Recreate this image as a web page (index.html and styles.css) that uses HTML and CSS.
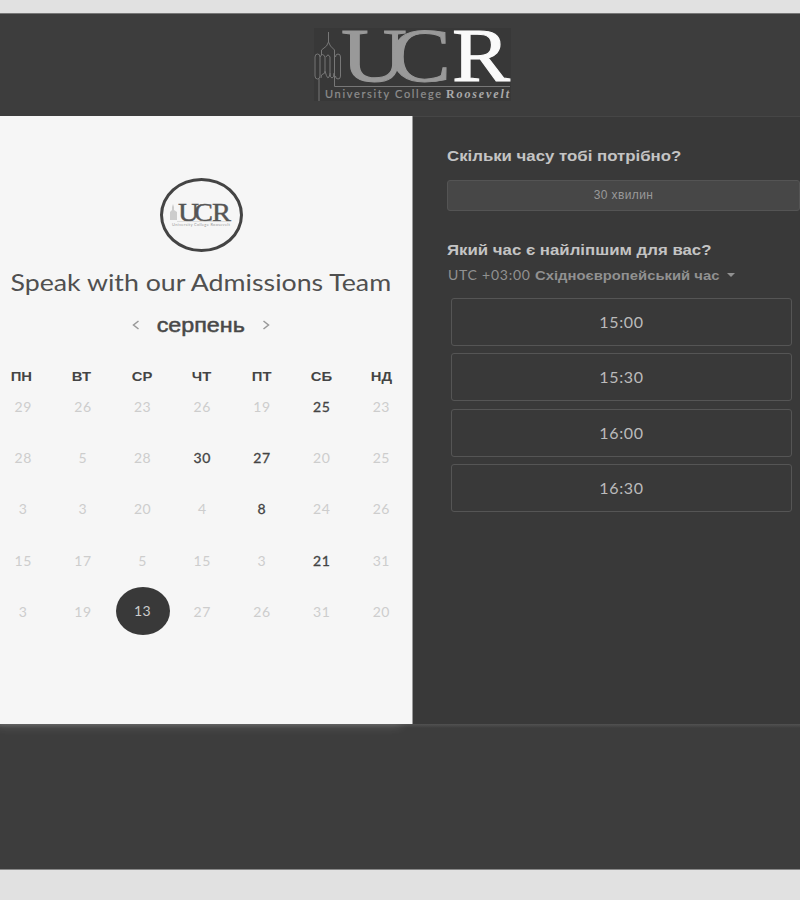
FILE: index.html
```html
<!DOCTYPE html>
<html lang="uk">
<head>
<meta charset="utf-8">
<title>UCR Admissions</title>
<link rel="stylesheet" href="styles.css">
</head>
<body>
<header class="header">
  <svg class="logo" width="198" height="76" viewBox="0 0 198 76">
    <rect width="197" height="73" fill="#383838"/>
    <g fill="none" stroke="#777" stroke-width="1">
      <path d="M14.500 4v10M14.500 14l-2 4-5 4v5M14.500 14l2 4 4 4v8"/>
      <path d="M3.500 51q-2.500 0-2.500-3V29q0-3 2.500-3t2.500 3v19q0 3-2.500 3zM6 29q2.500-5 5 0v14q0 3-2 3t-2 4M11 43q3 12 5 3V29q-2-4-4 0"/>
      <path d="M16 45q0 5 2 5t2-5M21.500 29q0-3 2.500-3t2.500 3v19q0 3-2.500 3t-2.500-3"/>
      <path d="M20.500 30v28.500H196M5 51v22"/>
    </g>
    <g class="logo-serif">
      <text x="27" y="53" font-size="76" textLength="66" lengthAdjust="spacingAndGlyphs" fill="#999" stroke="#999">U</text>
      <text x="76" y="53" font-size="76" textLength="61" lengthAdjust="spacingAndGlyphs" fill="#999" stroke="#999">C</text>
      <text x="138" y="53" font-size="76" textLength="58" lengthAdjust="spacingAndGlyphs" fill="#fafafa" stroke="#fafafa">R</text>
    </g>
    <text class="logo-sans" x="11" y="70" font-size="11" textLength="116" fill="#8e8e8e" stroke="#8e8e8e" stroke-width=".2">University College</text>
    <text class="logo-name" x="132" y="70" font-size="12" textLength="63" fill="#aaa">R<tspan font-style="italic">oosevelt</tspan></text>
  </svg>
</header>
<main class="main">
  <section class="calendar">
    <div class="avatar">
      <svg width="64" height="26" viewBox="0 0 64 26">
        <path d="M1 18v-8l2-2V5l1-3 1 3v3l3 2v8z" fill="#ccc"/>
        <g class="logo-serif" font-size="25" fill="#555" stroke="#555" stroke-width=".4">
          <text x="9" y="18.500" textLength="21" lengthAdjust="spacingAndGlyphs">U</text>
          <text x="25" y="18.500" textLength="19" lengthAdjust="spacingAndGlyphs">C</text>
          <text x="43" y="18.500" textLength="19" lengthAdjust="spacingAndGlyphs">R</text>
        </g>
        <path d="M8 19.500H61" stroke="#ccc" stroke-width=".6"/>
        <text class="logo-sans" x="3" y="23.500" font-size="4" textLength="58" fill="#999">University College Roosevelt</text>
      </svg>
    </div>
    <h1 class="title"><span>Speak with our Admissions Team</span></h1>
    <div class="month">
      <svg width="8" height="10" viewBox="0 0 8 10"><path d="M6.500 1L1.500 5l5 4"/></svg>
      <span class="month-name">серпень</span>
      <svg width="8" height="10" viewBox="0 0 8 10"><path d="M1.500 1l5 4-5 4"/></svg>
    </div>
    <div class="week names"><span>ПН</span><span>ВТ</span><span>СР</span><span>ЧТ</span><span>ПТ</span><span>СБ</span><span>НД</span></div>
    <div class="week"><span>29</span><span>26</span><span>23</span><span>26</span><span>19</span><span class="open">25</span><span>23</span></div>
    <div class="week"><span>28</span><span>5</span><span>28</span><span class="open">30</span><span class="open">27</span><span>20</span><span>25</span></div>
    <div class="week"><span>3</span><span>3</span><span>20</span><span>4</span><span class="open">8</span><span>24</span><span>26</span></div>
    <div class="week"><span>15</span><span>17</span><span>5</span><span>15</span><span>3</span><span class="open">21</span><span>31</span></div>
    <div class="week"><span>3</span><span>19</span><span><b class="selected">13</b></span><span>27</span><span>26</span><span>31</span><span>20</span></div>
  </section>
  <section class="times">
    <h2 class="q1">Скільки часу тобі потрібно?</h2>
    <div class="duration">30 хвилин</div>
    <h2 class="q2">Який час є найліпшим для вас?</h2>
    <div class="zone"><span class="utc">UTC +03:00</span><span class="zone-name">Східноєвропейський час</span><i class="caret"></i></div>
    <div class="slots">
      <div class="slot">15:00</div>
      <div class="slot">15:30</div>
      <div class="slot">16:00</div>
      <div class="slot">16:30</div>
    </div>
  </section>
</main>
<footer class="footer"></footer>
</body>
</html>
```
FILE: styles.css
```css
* { box-sizing: border-box; }
body {
  margin: 0;
  width: 800px;
  height: 900px;
  padding: 13px 0 30px;
  overflow: hidden;
  background: #e1e1e1;
  font-family: "Liberation Sans", sans-serif;
  display: flex;
  flex-direction: column;
}
h1, h2 { margin: 0; }
.header {
  height: 103px;
  flex: none;
  background: #3d3d3d;
  border-top: 1px solid #777;
  padding: 14px 0 0 314px;
}
.logo { display: block; overflow: visible; }
.logo-serif { font-family: "Liberation Serif", serif; }
.logo-sans { font-family: Lato, sans-serif; }
.logo-name { font-family: "Liberation Serif", serif; font-weight: bold; }
.main { height: 608px; flex: none; display: flex; position: relative; z-index: 1; }
.calendar {
  width: 413px;
  flex: none;
  background: #f6f6f6;
  border-right: 1px solid #999;
  box-shadow: -8px 6px 10px -4px rgba(255, 255, 255, .16);
  display: flex;
  flex-direction: column;
  align-items: center;
  padding: 62px 10px 0 0;
}
.avatar {
  width: 83px;
  height: 74px;
  border: 3px solid #444;
  border-radius: 50%;
  display: flex;
  align-items: center;
  justify-content: center;
}
.avatar svg { overflow: visible; }
.title {
  height: 60px;
  font: 400 23px/60px Lato, sans-serif;
  color: #505050;
  white-space: nowrap;
}
.title span { display: inline-block; transform: scaleX(1.162); }
.month {
  height: 26px;
  display: flex;
  align-items: center;
  gap: 21px;
  color: #484848;
}
.month svg { fill: none; stroke: #999; stroke-width: 1.5; }
.month-name { font-size: 21px; line-height: 26px; -webkit-text-stroke: .5px #484848; transform: scaleX(1.11); }
.week {
  height: 51.400px;
  width: 418.600px;
  flex: none;
  display: grid;
  grid-template-columns: repeat(7, 59.700px);
  align-items: center;
  justify-items: center;
  padding-left: 1.700px;
  font: 14px/20px Lato, sans-serif;
  letter-spacing: .6px;
  color: #cdcdcd;
}
.names {
  height: 20px;
  margin-top: 29px;
  margin-bottom: -6px;
  padding-left: 0;
  grid-template-columns: repeat(7, 60px);
  font: bold 13px/20px "Liberation Sans", sans-serif;
  letter-spacing: 0;
  color: #444;
}
.names span { transform: scaleX(1.14); }
.open { color: #444; -webkit-text-stroke: .3px #444; }
.selected {
  width: 54px;
  height: 48px;
  margin-bottom: 2px;
  border-radius: 50%;
  background: #393939;
  color: #ccc;
  font-weight: 400;
  display: flex;
  align-items: center;
  justify-content: center;
}
.times {
  flex: 1;
  min-width: 0;
  background: #393939;
  border-top: 1px solid #464646;
  padding: 28px 0 0 34px;
}
.times h2 {
  font-size: 15px;
  line-height: 22px;
  color: #c4c4c4;
  white-space: nowrap;
  width: max-content;
  transform: scaleX(1.12);
  transform-origin: left;
}
.duration {
  height: 31px;
  margin-top: 13px;
  border: 1px solid #545454;
  border-radius: 3px;
  background: #474747;
  color: #999;
  font-size: 12px;
  letter-spacing: .4px;
  line-height: 29px;
  text-align: center;
}
.times .q2 { margin-top: 28px; }
.zone {
  height: 20px;
  margin-top: 4px;
  padding-left: 1px;
  display: flex;
  align-items: center;
  color: #919191;
  white-space: nowrap;
}
.utc { width: 82px; font: 14px/20px Lato, sans-serif; letter-spacing: .75px; }
.zone-name {
  width: 185px;
  margin-left: 5px;
  font-size: 13px;
  font-weight: bold;
  transform: scaleX(1.14);
  transform-origin: left;
}
.zone-name { width: 162px; margin-right: 23px; }
.caret { margin-left: 7px; border: 4px solid transparent; border-top-color: #919191; border-bottom: 0; }
.slots { display: flex; flex-direction: column; gap: 7.300px; margin: 13px 8px 0 4px; }
.slot {
  height: 48px;
  border: 1px solid #555;
  border-radius: 3px;
  color: #bbb;
  font: 16px/46px Lato, sans-serif;
  letter-spacing: .7px;
  text-align: center;
}
.footer {
  flex: 1;
  background: linear-gradient(#515151, #3d3d3d 4px);
  border-bottom: 1px solid #888;
}
```
